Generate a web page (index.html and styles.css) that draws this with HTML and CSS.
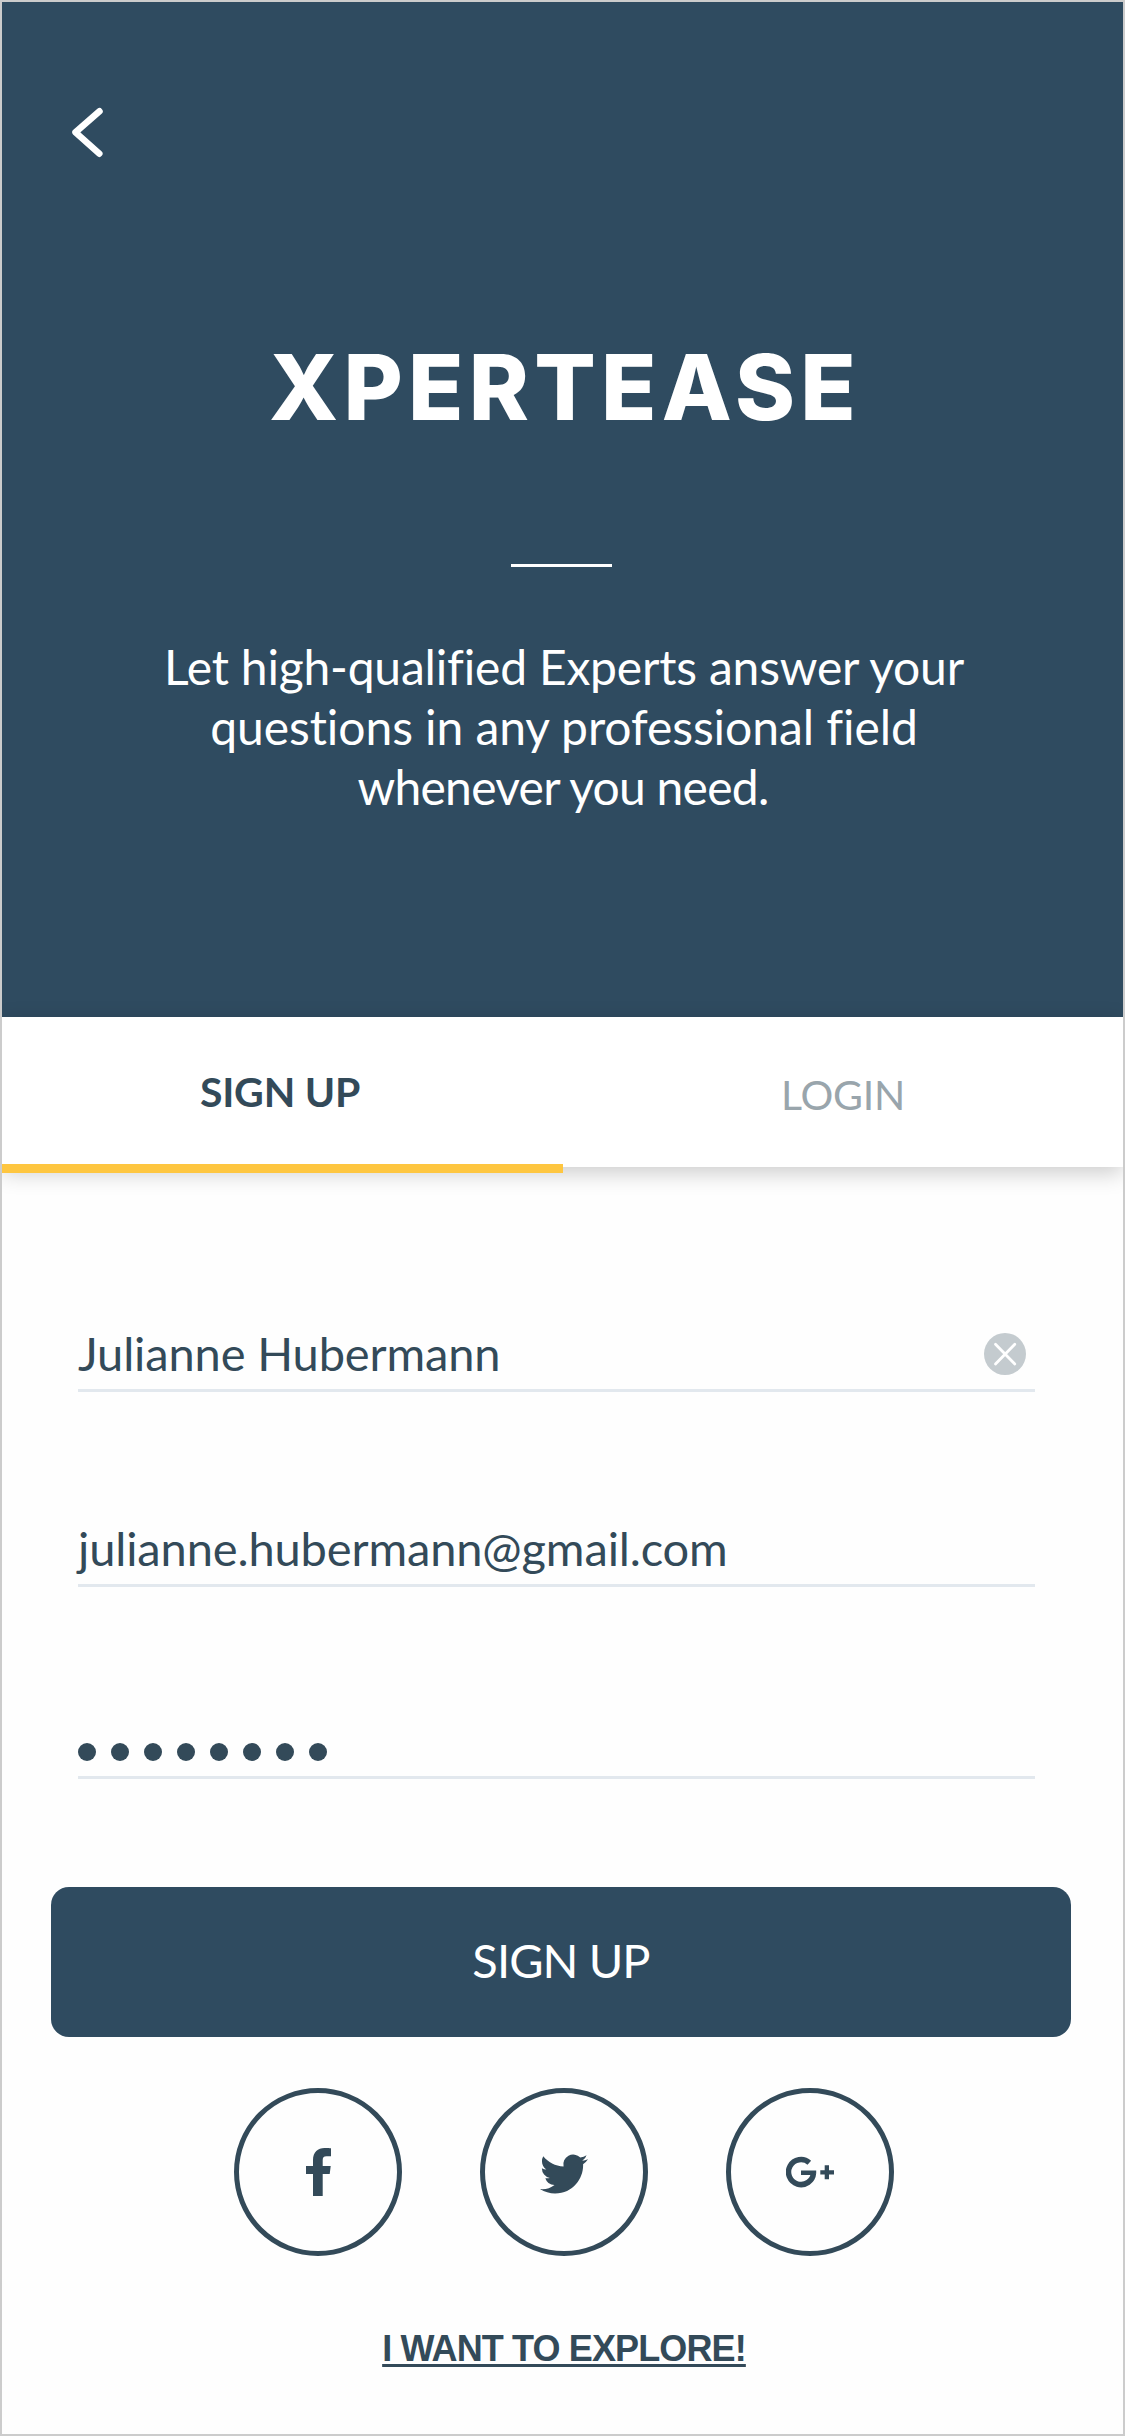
FILE: index.html
```html
<!DOCTYPE html>
<html lang="en">
<head>
  <meta charset="utf-8">
  <title>Xpertease – Sign up</title>
  <link rel="stylesheet" href="styles.css">
</head>
<body>
  <main class="screen">
    <header class="hero">
      <a class="back" aria-label="Back">
        <svg width="48" height="60" viewBox="0 0 48 60"><path d="M34.5 9.3 10.5 30.3 34.3 51.7"/></svg>
      </a>
      <h1 class="brand">XPERTEASE</h1>
      <hr class="divider">
      <p class="tagline">
        <span class="line line-first">Let high-qualified Experts answer your</span>
        <span class="line">questions in any professional field</span>
        <span class="line line-last">whenever you need.</span>
      </p>
    </header>

    <nav class="tabs">
      <a class="tab tab-active">SIGN UP</a>
      <a class="tab">LOGIN</a>
    </nav>

    <form class="form">
      <div class="field">
        <span>Julianne Hubermann</span>
        <svg class="clear" width="42" height="42" viewBox="0 0 42 42"><circle cx="21" cy="21" r="21"/><path d="M11.5 11.3 30.8 30.9M30.8 11.3 11.5 30.9"/></svg>
      </div>
      <div class="field field-email"><span>julianne.hubermann@gmail.com</span></div>
      <div class="field field-password">
        <i class="dot"></i><i class="dot"></i><i class="dot"></i><i class="dot"></i><i class="dot"></i><i class="dot"></i><i class="dot"></i><i class="dot"></i>
      </div>
      <button class="submit" type="button">SIGN UP</button>
    </form>

    <div class="socials">
      <a class="social" aria-label="Facebook">
        <svg width="48" height="48" viewBox="0 0 48 48"><path d="M37 .3V8.3H32.5C29.5 8.3 28.7 9.8 28.7 12.3V18H36.7L35.7 26H28.7V48H19V26H12V18H19V12C19 4 24 0 30.5 0 33.5 0 36 .2 37 .3z"/></svg>
      </a>
      <a class="social social-twitter" aria-label="Twitter">
        <svg width="48" height="48" viewBox="0 0 24 24"><path d="M23.953 4.57a10 10 0 01-2.825.775 4.958 4.958 0 002.163-2.723c-.951.555-2.005.959-3.127 1.184a4.92 4.92 0 00-8.384 4.482C7.69 8.095 4.067 6.13 1.64 3.162a4.822 4.822 0 00-.666 2.475c0 1.71.87 3.213 2.188 4.096a4.904 4.904 0 01-2.228-.616v.06a4.923 4.923 0 003.946 4.827 4.996 4.996 0 01-2.212.085 4.936 4.936 0 004.604 3.417 9.867 9.867 0 01-6.102 2.105c-.39 0-.779-.023-1.17-.067a13.995 13.995 0 007.557 2.209c9.053 0 13.998-7.496 13.998-13.985 0-.21 0-.42-.015-.63A9.935 9.935 0 0024 4.59z"/></svg>
      </a>
      <a class="social" aria-label="Google Plus">
        <svg width="48" height="48" viewBox="0 0 48 48"><path class="ring" d="M23.3 14.7A12.5 12.5 0 1 0 27.5 25"/><path d="M15 22.4H30.2V25L28 27H15zM38.7 17.3H43V22.3H48V26.5H43V31.3H38.7V26.5H34.3V22.3H38.7z"/></svg>
      </a>
    </div>

    <a class="explore">I WANT TO EXPLORE!</a>
  </main>
</body>
</html>
```
FILE: styles.css
```css
* {
  box-sizing: border-box;
}

body {
  margin: 0;
  background: #fefefe;
  color: #334a59;
  font-family: Lato, "Liberation Sans", sans-serif;
}

.screen {
  display: flex;
  flex-direction: column;
  width: 1125px;
  height: 2436px;
  border: 2px solid #ccc;
  background: #fefefe;
  overflow: hidden;
}

/* Hero */
.hero {
  display: flex;
  flex-direction: column;
  align-items: center;
  flex: none;
  height: 1015px;
  padding-top: 100px;
  background: #2f4b60;
  color: #fff;
}

.back {
  align-self: flex-start;
  height: 60px;
  margin-left: 63px;
}

.back svg {
  display: block;
  fill: none;
  stroke: #fff;
  stroke-width: 6.5;
  stroke-linecap: round;
  stroke-linejoin: round;
}

.brand {
  margin: 170px 0 0;
  font-family: Inter, "Liberation Sans", sans-serif;
  font-size: 91px;
  font-weight: 800;
  line-height: 110px;
  letter-spacing: 5.2px;
  text-indent: 5px;
}

.divider {
  width: 101px;
  height: 3px;
  margin: 122px 2px 0 0;
  border: 0;
  background: #fff;
}

.tagline {
  margin: 70px 0 0;
  padding-left: 3px;
  font-size: 48px;
  line-height: 60px;
  text-align: center;
  white-space: nowrap;
}

.line {
  display: block;
  letter-spacing: -0.07px;
}

.line-first {
  letter-spacing: -0.2px;
}

.line-last {
  padding-right: 2px;
  letter-spacing: -0.75px;
}

/* Tabs */
.tabs {
  display: flex;
  flex: none;
  height: 150px;
  background: #fff;
  box-shadow: 0 6px 21px rgba(0, 0, 0, 0.2);
}

.tab {
  position: relative;
  flex: 1;
  padding: 53px 2px 0 0;
  color: #99a5ac;
  font-size: 41px;
  line-height: 50px;
  letter-spacing: -0.23px;
  text-align: center;
}

.tab-active {
  padding: 50px 7px 0 0;
  color: #334a59;
  font-weight: 700;
}

.tab-active::after {
  content: "";
  position: absolute;
  left: 0;
  bottom: -6px;
  width: 561px;
  height: 9px;
  background: #fec640;
}

/* Form */
.form {
  display: flex;
  flex-direction: column;
  padding: 158px 52px 0 49px;
}

.field {
  display: flex;
  align-items: center;
  justify-content: space-between;
  width: 957px;
  height: 67px;
  margin-left: 27px;
  padding: 1px 9px 8px 0;
  border-bottom: 3px solid #e2e8ee;
  font-size: 47px;
  line-height: 57px;
  letter-spacing: -0.13px;
}

.clear {
  fill: #c4cbcf;
}

.clear path {
  fill: none;
  stroke: #fff;
  stroke-width: 2.8;
  stroke-linecap: round;
}

.field-email {
  margin-top: 128px;
}

.field-password {
  justify-content: flex-start;
  gap: 15px;
  margin-top: 125px;
  padding-top: 24px;
}

.dot {
  width: 18px;
  height: 18px;
  border-radius: 50%;
  background: #334a59;
}

.submit {
  height: 150px;
  margin-top: 108px;
  padding: 0 0 5px;
  border: 0;
  border-radius: 18px;
  background: #2f4b60;
  color: #fff;
  font: 47px Lato, "Liberation Sans", sans-serif;
  letter-spacing: -0.9px;
}

/* Social sign-in */
.socials {
  display: flex;
  gap: 78px;
  margin: 51px 0 0 232px;
}

.social {
  display: flex;
  align-items: center;
  justify-content: center;
  width: 168px;
  height: 168px;
  border: 5px solid #334a59;
  border-radius: 50%;
  fill: #334a59;
}

.social-twitter {
  padding-top: 3px;
}

.ring {
  fill: none;
  stroke: #334a59;
  stroke-width: 5.5;
}

.explore {
  align-self: center;
  margin: 73px 0 0 3px;
  font: 700 36px/40px "Liberation Sans", sans-serif;
  letter-spacing: -0.87px;
  text-decoration: underline;
  text-decoration-thickness: 3px;
  text-underline-offset: 3px;
  text-decoration-skip-ink: none;
}
```
